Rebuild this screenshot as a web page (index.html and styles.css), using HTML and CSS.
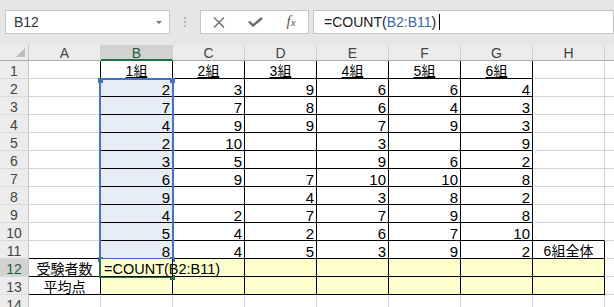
FILE: index.html
```html
<!DOCTYPE html>
<html lang="ja">
<head>
    <meta charset="UTF-8">
    <title>受験者数</title>
    <link rel="stylesheet" href="styles.css">
</head>
<body>
    <!-- 名前ボックスと数式バー -->
    <div class="toolbar">
        <div class="box namebox"><span>B12</span><span class="arrow"></span></div>
        <div class="grip"><span></span><span></span><span></span></div>
        <div class="box fbtns">
            <span>
                <svg width="12" height="11" viewBox="0 0 12 11"><path d="M1 0.5 L11 10.5 M11 0.5 L1 10.5" stroke="#6b6b6b" stroke-width="1.4" fill="none"/></svg>
            </span>
            <span>
                <svg width="15" height="10" viewBox="0 0 15 10"><path d="M1 4.5 L5 8.5 L14 1" stroke="#6b6b6b" stroke-width="2.4" fill="none"/></svg>
            </span>
            <span class="fx">f<small>x</small></span>
        </div>
        <div class="box formula">=COUNT(<span class="ref">B2:B11</span>)<span class="caret"></span></div>
    </div>

    <!-- シート -->
    <div class="sheet">
        <div class="corner"><span></span></div>
        <div class="ch">A</div><div class="ch on">B</div><div class="ch">C</div><div class="ch">D</div><div class="ch">E</div><div class="ch">F</div><div class="ch">G</div><div class="ch">H</div><div class="ch"></div>

        <div class="rh">1</div><div class="cell edge-r"></div>
        <div class="cell bd head">1組</div><div class="cell bd head">2組</div><div class="cell bd head">3組</div><div class="cell bd head">4組</div><div class="cell bd head">5組</div><div class="cell bd head">6組</div>
        <div class="cell"></div><div class="cell"></div>

        <div class="rh">2</div><div class="cell edge-r"></div>
        <div class="cell bd sel">2</div><div class="cell bd">3</div><div class="cell bd">9</div><div class="cell bd">6</div><div class="cell bd">6</div><div class="cell bd">4</div>
        <div class="cell"></div><div class="cell"></div>

        <div class="rh">3</div><div class="cell edge-r"></div>
        <div class="cell bd sel">7</div><div class="cell bd">7</div><div class="cell bd">8</div><div class="cell bd">6</div><div class="cell bd">4</div><div class="cell bd">3</div>
        <div class="cell"></div><div class="cell"></div>

        <div class="rh">4</div><div class="cell edge-r"></div>
        <div class="cell bd sel">4</div><div class="cell bd">9</div><div class="cell bd">9</div><div class="cell bd">7</div><div class="cell bd">9</div><div class="cell bd">3</div>
        <div class="cell"></div><div class="cell"></div>

        <div class="rh">5</div><div class="cell edge-r"></div>
        <div class="cell bd sel">2</div><div class="cell bd">10</div><div class="cell bd"></div><div class="cell bd">3</div><div class="cell bd"></div><div class="cell bd">9</div>
        <div class="cell"></div><div class="cell"></div>

        <div class="rh">6</div><div class="cell edge-r"></div>
        <div class="cell bd sel">3</div><div class="cell bd">5</div><div class="cell bd"></div><div class="cell bd">9</div><div class="cell bd">6</div><div class="cell bd">2</div>
        <div class="cell"></div><div class="cell"></div>

        <div class="rh">7</div><div class="cell edge-r"></div>
        <div class="cell bd sel">6</div><div class="cell bd">9</div><div class="cell bd">7</div><div class="cell bd">10</div><div class="cell bd">10</div><div class="cell bd">8</div>
        <div class="cell"></div><div class="cell"></div>

        <div class="rh">8</div><div class="cell edge-r"></div>
        <div class="cell bd sel">9</div><div class="cell bd"></div><div class="cell bd">4</div><div class="cell bd">3</div><div class="cell bd">8</div><div class="cell bd">2</div>
        <div class="cell"></div><div class="cell"></div>

        <div class="rh">9</div><div class="cell edge-r"></div>
        <div class="cell bd sel">4</div><div class="cell bd">2</div><div class="cell bd">7</div><div class="cell bd">7</div><div class="cell bd">9</div><div class="cell bd">8</div>
        <div class="cell"></div><div class="cell"></div>

        <div class="rh">10</div><div class="cell edge-r"></div>
        <div class="cell bd sel">5</div><div class="cell bd">4</div><div class="cell bd">2</div><div class="cell bd">6</div><div class="cell bd">7</div><div class="cell bd">10</div>
        <div class="cell edge-b"></div><div class="cell"></div>

        <div class="rh">11</div><div class="cell edge-r edge-b"></div>
        <div class="cell bd sel">8</div><div class="cell bd">4</div><div class="cell bd">5</div><div class="cell bd">3</div><div class="cell bd">9</div><div class="cell bd">2</div>
        <div class="cell bd label">6組全体</div><div class="cell"></div>

        <div class="rh on">12</div><div class="cell bd label">受験者数</div>
        <div class="cell bd fill editing">=COUNT(B2:B11)</div><div class="cell bd fill"></div><div class="cell bd fill"></div><div class="cell bd fill"></div><div class="cell bd fill"></div><div class="cell bd fill"></div><div class="cell bd fill"></div>
        <div class="cell"></div>

        <div class="rh">13</div><div class="cell bd label">平均点</div>
        <div class="cell bd fill"></div><div class="cell bd fill"></div><div class="cell bd fill"></div><div class="cell bd fill"></div><div class="cell bd fill"></div><div class="cell bd fill"></div><div class="cell bd fill"></div>
        <div class="cell"></div>

        <div class="rh">14</div><div class="cell"></div><div class="cell"></div><div class="cell"></div><div class="cell"></div><div class="cell"></div><div class="cell"></div><div class="cell"></div><div class="cell"></div><div class="cell"></div>

        <!-- 選択範囲 B2:B11 とアクティブセル B12 -->
        <div class="selection">
            <span class="handle tl"></span><span class="handle tr"></span>
            <span class="handle bl"></span><span class="handle br"></span>
        </div>
        <div class="active"><span class="handle br"></span></div>
    </div>
</body>
</html>
```

FILE: styles.css
```css
body {
    margin: 0;
    width: 614px;
    height: 307px;
    overflow: hidden;
    background-color: #fff;
    font-family: "Liberation Sans", "Noto Sans CJK JP", sans-serif;
}

/* ツールバー */
.toolbar {
    display: flex;
    align-items: flex-start;
    height: 45px;
    padding: 10px 0 0 5px;
    box-sizing: border-box;
    background-color: #e6e6e6;
}

.box {
    height: 24px;
    box-sizing: border-box;
    background-color: #fff;
    border: 1px solid #c6c6c6;
}

.namebox {
    width: 165px;
    display: flex;
    align-items: center;
    justify-content: space-between;
    padding: 0 7px 0 8px;
    font-size: 14px;
    color: #333;
}

.arrow {
    width: 0;
    height: 0;
    border-left: 3px solid transparent;
    border-right: 3px solid transparent;
    border-top: 3px solid #777;
}

.grip {
    width: 30px;
    height: 24px;
    display: flex;
    flex-direction: column;
    align-items: center;
    justify-content: center;
    gap: 2px;
}

.grip span {
    width: 2px;
    height: 2px;
    background-color: #b5b5b5;
}

.fbtns {
    width: 109px;
    display: grid;
    grid-template-columns: 36px 36px 36px;
    align-items: center;
    justify-items: center;
}

.fbtns svg {
    display: block;
}

.fx {
    font-family: "Liberation Serif", serif;
    font-style: italic;
    font-size: 15px;
    color: #595959;
    line-height: 15px;
}

.fx small {
    font-size: 11px;
}

.formula {
    flex: 1;
    margin-left: 4px;
    padding-left: 10px;
    font-size: 14px;
    line-height: 22px;
    color: #222;
    white-space: nowrap;
}

.ref {
    color: #3b66b0;
}

.caret {
    display: inline-block;
    width: 1px;
    height: 16px;
    margin-left: 3px;
    vertical-align: -3px;
    background-color: #000;
}

/* シート */
.sheet {
    position: relative;
    display: grid;
    grid-template-columns: 29px repeat(9, 72px);
    grid-template-rows: 16px;
    grid-auto-rows: 18px;
}

.corner {
    position: relative;
    background-color: #ececec;
    border-right: 1px solid #c6c6c6;
    border-bottom: 1px solid #ababab;
}

.corner span {
    position: absolute;
    right: 3px;
    bottom: 3px;
    width: 0;
    height: 0;
    border-left: 9px solid transparent;
    border-bottom: 9px solid #bcbcbc;
}

.ch {
    background-color: #ececec;
    border-right: 1px solid #d0d0d0;
    border-bottom: 1px solid #ababab;
    font-size: 14px;
    line-height: 16px;
    text-align: center;
    color: #444;
}

.ch.on {
    background-color: #d2d2d2;
    border-bottom: 2px solid #217346;
    color: #1f5c38;
}

.rh {
    background-color: #ececec;
    border-right: 1px solid #c6c6c6;
    border-bottom: 1px solid #dadada;
    padding-top: 3px;
    font-size: 14px;
    line-height: 15px;
    text-align: center;
    color: #444;
}

.rh.on {
    background-color: #d2d2d2;
    color: #1f5c38;
}

.cell {
    box-sizing: border-box;
    border-right: 1px solid #d4d4d4;
    border-bottom: 1px solid #d4d4d4;
    padding: 3px 2px 0;
    font-size: 15px;
    line-height: 15px;
    text-align: right;
    white-space: nowrap;
    color: #000;
}

.cell.bd {
    border-right-color: #000;
    border-bottom-color: #000;
}

.cell.edge-r {
    border-right-color: #000;
}

.cell.edge-b {
    border-bottom-color: #000;
}

.cell.head {
    text-align: center;
    font-size: 14px;
    text-decoration: underline;
    text-underline-offset: 1px;
}

.cell.label {
    text-align: center;
    font-size: 14px;
}

.cell.sel {
    background-color: #e7edf7;
}

.cell.fill {
    background-color: #ffffcc;
}

.cell.editing {
    position: relative;
    z-index: 1;
    text-align: left;
    font-size: 14.5px;
    padding-left: 3px;
}

.selection {
    position: absolute;
    left: 99px;
    top: 33px;
    width: 75px;
    height: 182px;
    box-sizing: border-box;
    border: 2px solid #4472c4;
}

.active {
    position: absolute;
    left: 99px;
    top: 214px;
    width: 74px;
    height: 19px;
    box-sizing: border-box;
    border: 2px solid #217346;
    border-right: none;
}

.handle {
    position: absolute;
    width: 5px;
    height: 5px;
    background-color: #4472c4;
}

.handle.tl { left: -3px; top: -2px; }
.handle.tr { right: -3px; top: -2px; }
.handle.bl { left: -3px; bottom: -4px; }
.handle.br { right: -3px; bottom: -4px; }

.active .handle.br {
    right: -2px;
    background-color: #217346;
}
```
